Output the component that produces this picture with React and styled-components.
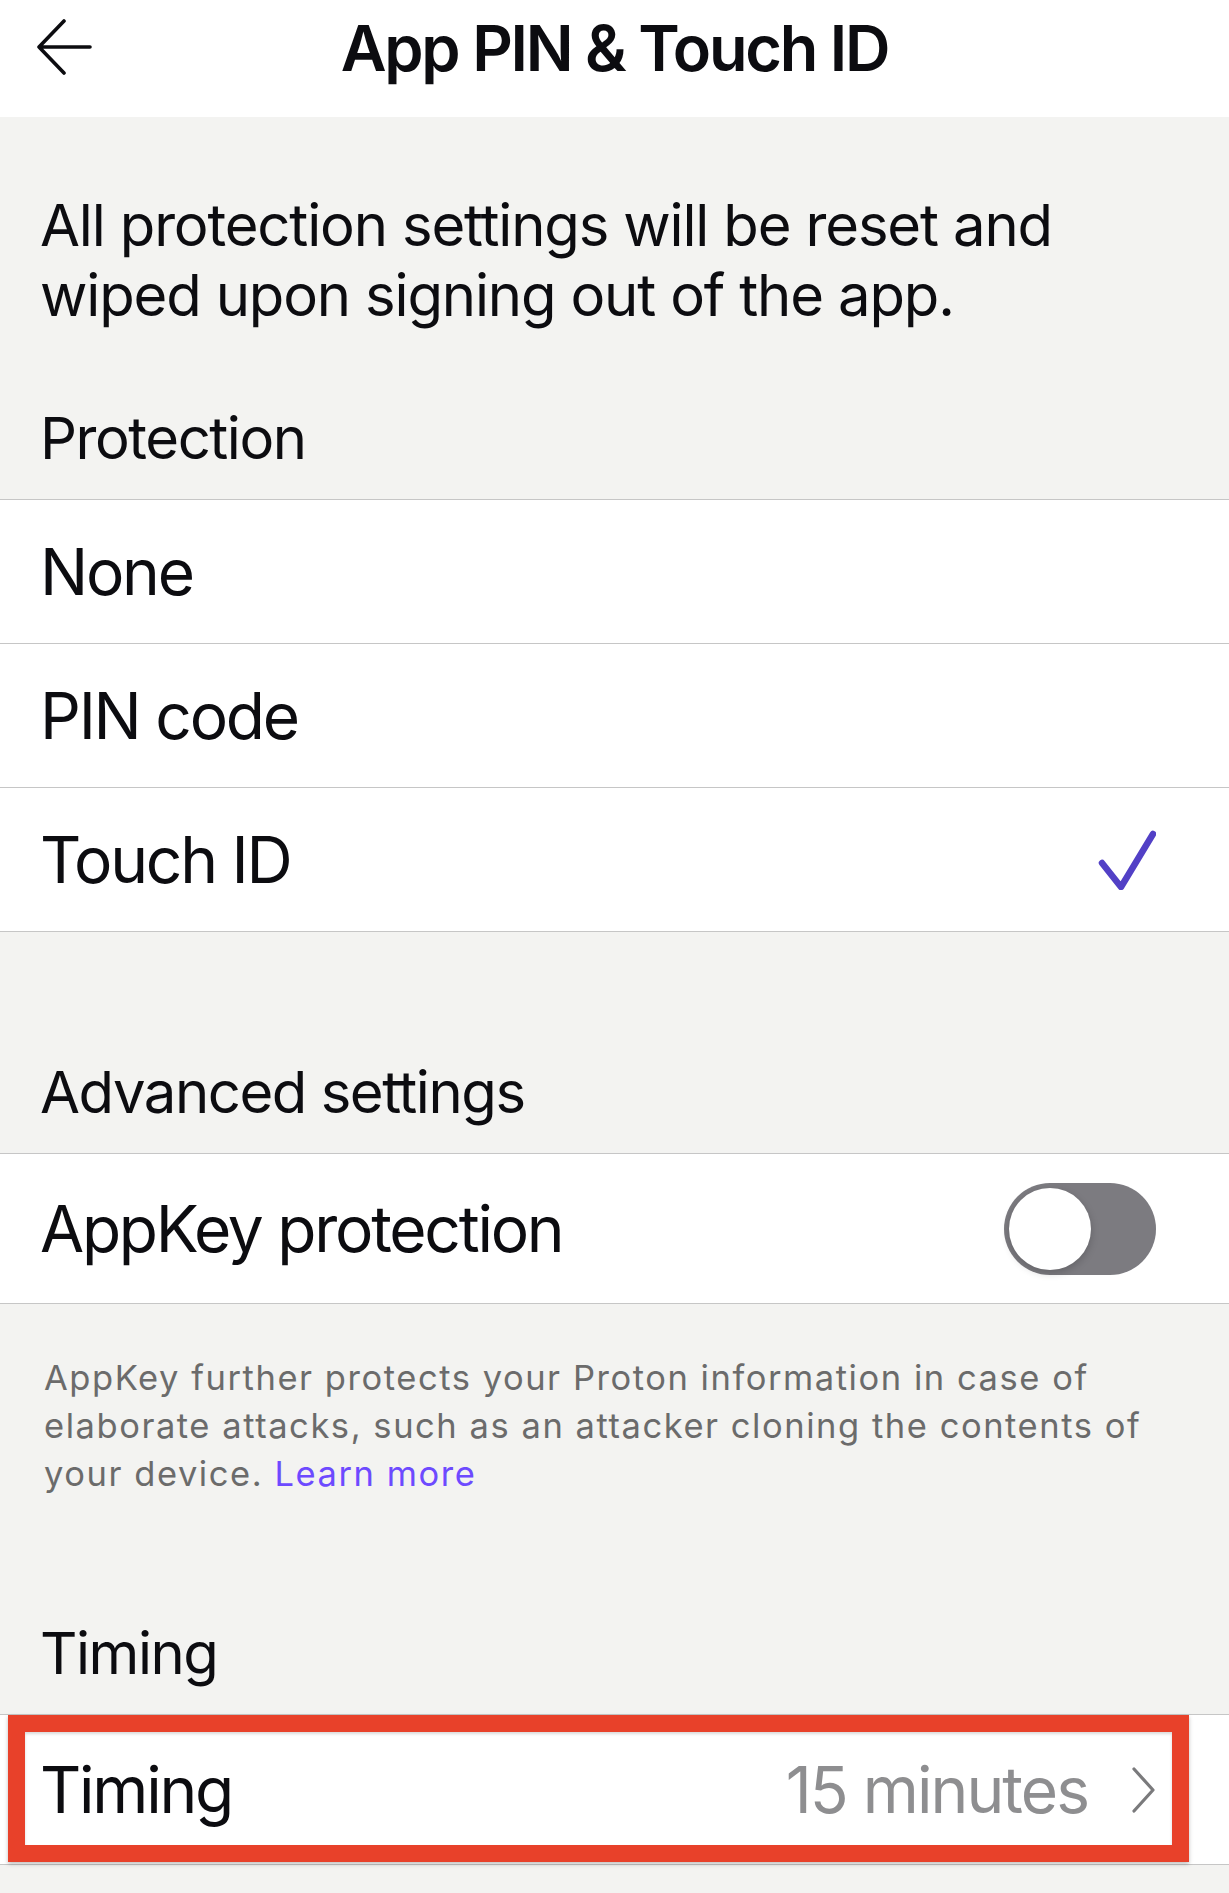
import React from "react";
import styled, { createGlobalStyle } from "styled-components";

const Global = createGlobalStyle`
  html, body { margin: 0; padding: 0; background: #f3f3f1; }
  body { font-family: Inter, "Noto Sans", sans-serif; -webkit-font-smoothing: antialiased; }
  * { box-sizing: border-box; }
`;

const Screen = styled.div`
  width: 1229px;
  min-height: 1893px;
  background: #f3f3f1;
  color: #0c0c10;
  font-family: Inter, "Noto Sans", sans-serif;
`;

const Header = styled.header`
  height: 117px;
  background: #ffffff;
  display: grid;
  grid-template-columns: 117px 1fr 117px;
  align-items: start;
`;

const BackButton = styled.button`
  border: 0;
  background: none;
  padding: 19px 0 0 36px;
  display: flex;
  align-items: flex-start;
  cursor: pointer;
`;

const Title = styled.h1`
  margin: 0;
  padding-top: 17px;
  text-align: center;
  font-size: 63px;
  font-weight: 600;
  letter-spacing: -0.035em;
  line-height: 1;
`;

const Intro = styled.p`
  margin: 0;
  padding: 73px 40px 0;
  font-size: 58px;
  line-height: 70px;
  letter-spacing: -0.02em;
  color: #0c0c10;
`;

const SectionTitle = styled.div`
  padding: ${(p) => p.$top}px 40px 26px;
  font-size: 58px;
  line-height: 70px;
  letter-spacing: -0.025em;
  border-bottom: 1px solid #c6c6c6;
`;

const Row = styled.div`
  position: relative;
  height: ${(p) => p.$h}px;
  background: #ffffff;
  border-bottom: 1px solid #c6c6c6;
  display: flex;
  align-items: center;
  justify-content: space-between;
  padding: 0 73px 0 40px;
`;

const RowLabel = styled.span`
  font-size: 64px;
  letter-spacing: -0.035em;
  line-height: 1;
`;

const RowValue = styled.span`
  display: flex;
  align-items: center;
  gap: 44px;
  font-size: 64px;
  letter-spacing: -0.03em;
  line-height: 1;
  color: #8e8e90;
`;

const Toggle = styled.div`
  width: 152px;
  height: 92px;
  border-radius: 46px;
  background: #7c7b80;
  padding: 5px;
  display: flex;
  align-items: center;
`;

const Knob = styled.div`
  width: 82px;
  height: 82px;
  border-radius: 50%;
  background: #ffffff;
  box-shadow: 0 3px 8px rgba(0, 0, 0, 0.2);
`;

const Footnote = styled.p`
  margin: 0;
  padding: 50px 60px 0 44px;
  font-size: 34.5px;
  line-height: 48px;
  letter-spacing: 1.55px;
  color: #6b6b6b;
`;

const Link = styled.a`
  color: #6d4aff;
  text-decoration: none;
`;

const Highlight = styled.div`
  position: absolute;
  left: 8px;
  right: 40px;
  top: 0;
  bottom: 2px;
  border: 17px solid #e8412a;
  box-shadow: 0 2px 4px rgba(0, 0, 0, 0.25), inset 0 2px 3px rgba(0, 0, 0, 0.15);
  pointer-events: none;
`;

const BackArrow = () => (
  <svg width="56" height="56" viewBox="0 0 56 56" fill="none">
    <path
      d="M54 28H3M28 2L3 28L28 54"
      stroke="#0c0c10"
      strokeWidth="3.6"
      strokeLinecap="round"
      strokeLinejoin="round"
    />
  </svg>
);

const Check = () => (
  <svg width="60" height="60" viewBox="0 0 60 60" fill="none">
    <path
      d="M6 33L25 57L57 4"
      stroke="#5240c6"
      strokeWidth="6.5"
      strokeLinecap="round"
      strokeLinejoin="round"
    />
  </svg>
);

const Chevron = () => (
  <svg width="24" height="46" viewBox="0 0 24 46" fill="none">
    <path
      d="M2 2L21 23L2 44"
      stroke="#7a7a7c"
      strokeWidth="3.2"
      strokeLinecap="round"
      strokeLinejoin="round"
    />
  </svg>
);

export default function App() {
  return (
    <>
      <Global />
      <Screen>
        <Header>
          <BackButton aria-label="Back">
            <BackArrow />
          </BackButton>
          <Title>App PIN &amp; Touch ID</Title>
          <div />
        </Header>

        <Intro>
          All protection settings will be reset and wiped upon signing out of
          the app.
        </Intro>

        <SectionTitle $top={73}>Protection</SectionTitle>
        <Row $h={144}>
          <RowLabel>None</RowLabel>
        </Row>
        <Row $h={144}>
          <RowLabel>PIN code</RowLabel>
        </Row>
        <Row $h={144}>
          <RowLabel>Touch ID</RowLabel>
          <Check />
        </Row>

        <SectionTitle $top={125}>Advanced settings</SectionTitle>
        <Row $h={150}>
          <RowLabel>AppKey protection</RowLabel>
          <Toggle>
            <Knob />
          </Toggle>
        </Row>
        <Footnote>
          AppKey further protects your Proton information in case of elaborate
          attacks, such as an attacker cloning the contents of your device.{" "}
          <Link href="#">Learn more</Link>
        </Footnote>

        <SectionTitle $top={120}>Timing</SectionTitle>
        <Row $h={150}>
          <RowLabel>Timing</RowLabel>
          <RowValue>
            15 minutes
            <Chevron />
          </RowValue>
          <Highlight />
        </Row>
      </Screen>
    </>
  );
}
